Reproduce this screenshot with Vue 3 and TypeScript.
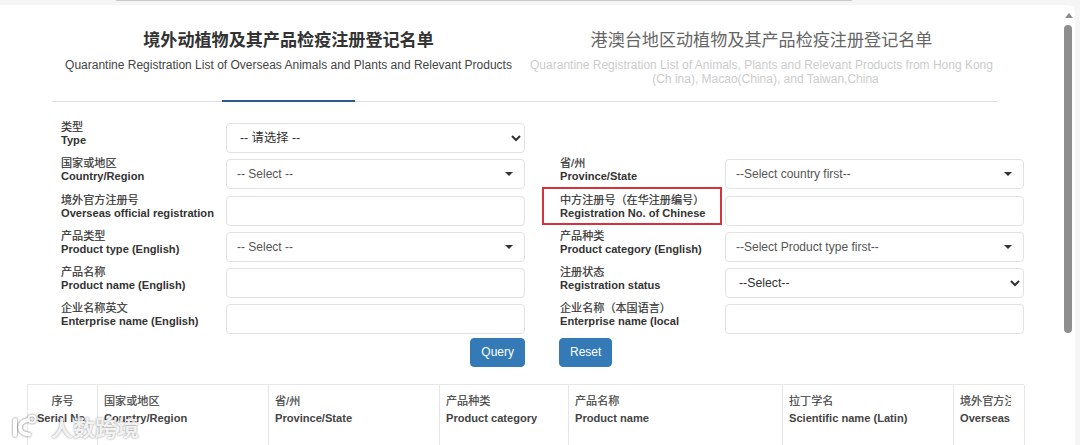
<script setup lang="ts">
type Field = {
  zh: string
  en: string
  kind: 'native' | 'picker' | 'input' | 'empty'
  value?: string
  marked?: boolean
}

const fields: Field[] = [
  { zh: '类型', en: 'Type', kind: 'native', value: '-- 请选择 --' },
  { zh: '', en: '', kind: 'empty' },
  { zh: '国家或地区', en: 'Country/Region', kind: 'picker', value: '-- Select --' },
  { zh: '省/州', en: 'Province/State', kind: 'picker', value: '--Select country first--' },
  { zh: '境外官方注册号', en: 'Overseas official registration', kind: 'input' },
  { zh: '中方注册号（在华注册编号）', en: 'Registration No. of Chinese', kind: 'input', marked: true },
  { zh: '产品类型', en: 'Product type (English)', kind: 'picker', value: '-- Select --' },
  { zh: '产品种类', en: 'Product category (English)', kind: 'picker', value: '--Select Product type first--' },
  { zh: '产品名称', en: 'Product name (English)', kind: 'input' },
  { zh: '注册状态', en: 'Registration status', kind: 'native', value: '--Select--' },
  { zh: '企业名称英文', en: 'Enterprise name (English)', kind: 'input' },
  { zh: '企业名称（本国语言）', en: 'Enterprise name (local', kind: 'input' },
]

const columns = [
  { zh: '序号', en: 'Serial No.', width: 70, center: true },
  { zh: '国家或地区', en: 'Country/Region', width: 171 },
  { zh: '省/州', en: 'Province/State', width: 171 },
  { zh: '产品种类', en: 'Product category', width: 129 },
  { zh: '产品名称', en: 'Product name', width: 214 },
  { zh: '拉丁学名', en: 'Scientific name (Latin)', width: 171 },
  { zh: '境外官方注册号', en: 'Overseas official registration', width: 71 },
]
</script>

<template>
  <div class="page">
    <div class="top-strip"><div class="top-bar"></div></div>
    <div class="panel">
      <main class="content">
        <nav class="tabs">
          <div class="tab active">
            <h2>境外动植物及其产品检疫注册登记名单</h2>
            <p>Quarantine Registration List of Overseas Animals and Plants and Relevant Products</p>
          </div>
          <div class="tab">
            <h2>港澳台地区动植物及其产品检疫注册登记名单</h2>
            <p>Quarantine Registration List of Animals, Plants and Relevant Products from Hong Kong <span class="paren">(Ch</span> ina), Macao(China), and Taiwan,China</p>
          </div>
        </nav>

        <form class="filters" @submit.prevent>
          <div v-for="(f, i) in fields" :key="i" class="field">
            <template v-if="f.kind !== 'empty'">
              <label class="label" :class="{ marked: f.marked }">
                <span>{{ f.zh }}</span>
                <span>{{ f.en }}</span>
              </label>
              <select v-if="f.kind === 'native'" class="control native">
                <option>{{ f.value }}</option>
              </select>
              <div v-else-if="f.kind === 'picker'" class="control picker">
                <span>{{ f.value }}</span>
                <i class="caret"></i>
              </div>
              <input v-else class="control" type="text" />
            </template>
          </div>
          <div class="actions query"><button type="submit" class="btn">Query</button></div>
          <div class="actions reset"><button type="reset" class="btn">Reset</button></div>
        </form>

        <div class="results">
          <div
            v-for="c in columns"
            :key="c.en"
            class="col"
            :class="{ center: c.center }"
            :style="{ width: c.width + 'px' }"
          >
            <div>{{ c.zh }}</div>
            <div>{{ c.en }}</div>
          </div>
        </div>
      </main>

      <aside class="scrollbar">
        <i class="arrow"></i>
        <div class="thumb"></div>
      </aside>
    </div>

    <div class="watermark">
      <svg width="26" height="26" viewBox="0 0 26 26">
        <path d="M3 7v15M16 7c-5 1-8 4-8 7.500s3 6.500 9 7" fill="none" stroke="#fff" stroke-width="4" stroke-linecap="round" />
        <circle cx="20" cy="6" r="3.600" fill="none" stroke="#fff" stroke-width="2" />
      </svg>
      <span>人数跨境</span>
    </div>
  </div>
</template>

<style scoped>
.page {
  position: relative;
  height: 445px;
  overflow: hidden;
  display: flex;
  flex-direction: column;
  background: #f5f5f5;
  font-family: "Liberation Sans", "Noto Sans CJK SC", sans-serif;
  color: #333;
}

.top-strip {
  height: 5px;
  flex: none;
  padding-left: 116px;
}

.top-bar {
  width: 736px;
  height: 1px;
  background: #c9c9c9;
}

.panel {
  flex: 1;
  display: flex;
  margin-right: 5px;
  min-height: 0;
  background: #fff;
  border-top-right-radius: 8px;
}

.content {
  flex: 1;
  min-width: 0;
}

.tabs {
  display: flex;
  width: 946px;
  height: 96px;
  margin-left: 52px;
  border-bottom: 1px solid #ddd;
}

.tab {
  position: relative;
  box-sizing: border-box;
  width: 474px;
  padding: 23px 4px 0;
  text-align: center;
  color: #ccc;
}

.tab h2 {
  margin: 0 0 9px;
  font-size: 17.1px;
  line-height: 22px;
  font-weight: 400;
  color: #666;
  font-family: "Noto Sans CJK SC", sans-serif;
}

.tab p {
  margin: 0;
  font-size: 12px;
  line-height: 13.5px;
}

.paren {
  padding-left: 8px;
}

.tab.active {
  color: #444;
}

.tab.active h2 {
  font-weight: 700;
  color: #333;
}

.tab.active::after {
  content: '';
  position: absolute;
  left: 170px;
  bottom: -1px;
  width: 133px;
  height: 2px;
  background: #2a5a8f;
}

.filters {
  display: grid;
  grid-template-columns: 464px 464px;
  column-gap: 35px;
  grid-auto-rows: 30px;
  row-gap: 6.3px;
  margin: 21px 0 0 61px;
  width: 963px;
}

.field {
  display: flex;
}

.label {
  width: 165px;
  flex: none;
  display: flex;
  flex-direction: column;
  margin-top: -2px;
  font-size: 11.1px;
  line-height: 13px;
  font-weight: 700;
  color: #333;
  white-space: nowrap;
}

.label span:first-child {
  font-weight: 400;
  -webkit-text-stroke: 0.2px #333;
}

.label.marked {
  position: relative;
}

.label.marked::before {
  content: '';
  position: absolute;
  left: -18px;
  top: -7px;
  width: 180px;
  height: 38px;
  border: 2px solid #d8323a;
  box-sizing: border-box;
}

.control {
  box-sizing: border-box;
  width: 299px;
  height: 30px;
  border: 1px solid #e2e2e2;
  border-radius: 4px;
  background: #fff;
  color: #444;
  font-family: inherit;
  font-size: 12px;
  outline: none;
}

.native {
  padding: 0 0 0 9px;
  color: #333;
  font-size: 12.3px;
}

.picker {
  display: flex;
  align-items: center;
  justify-content: space-between;
  padding: 0 11px 0 10px;
  color: #555;
}

.caret {
  width: 0;
  height: 0;
  border: 4px solid transparent;
  border-top: 4px solid #333;
  border-bottom: 0;
}

.actions {
  display: flex;
  height: 30px;
  margin-top: -3px;
}

.query {
  justify-content: flex-end;
}

.reset {
  margin-left: -1px;
}

.btn {
  height: 29px;
  padding: 0 10px;
  border: 1px solid #337ab7;
  border-radius: 4px;
  background: #337ab7;
  color: #fff;
  font-family: inherit;
  font-size: 12px;
}

.results {
  display: flex;
  width: 996px;
  height: 70px;
  margin: 13px 0 0 27px;
  border-top: 1px solid #e6e6e6;
  border-left: 1px solid #e6e6e6;
}

.col {
  box-sizing: border-box;
  flex: none;
  padding: 8px 13px 0 6px;
  border-right: 1px solid #e6e6e6;
  font-size: 11.1px;
  line-height: 17px;
  font-weight: 700;
  color: #444;
  white-space: nowrap;
}

.col > div {
  overflow: hidden;
}

.col.center {
  padding: 8px 0 0;
  text-align: center;
}

.col > div:first-child {
  font-weight: 400;
  -webkit-text-stroke: 0.2px #444;
}

.scrollbar {
  flex: none;
  position: relative;
  width: 11px;
  padding-top: 20px;
  background: #fff;
  border-top-right-radius: 8px;
}

.arrow {
  position: absolute;
  top: 8px;
  left: 1px;
  width: 0;
  height: 0;
  border: 4px solid transparent;
  border-bottom: 5px solid #8a8a8a;
  border-top: 0;
}

.thumb {
  width: 8px;
  height: 308px;
  border-radius: 4px;
  background: #8e8e8e;
}

.watermark {
  position: absolute;
  left: 12px;
  bottom: 6px;
  display: flex;
  align-items: center;
  gap: 13px;
  font-family: "Noto Sans CJK SC", sans-serif;
  font-size: 22px;
  font-weight: 700;
  line-height: 26px;
  color: rgba(255, 255, 255, 0.9);
  text-shadow: 0 0 2px rgba(0, 0, 0, 0.5);
}

.watermark svg {
  filter: drop-shadow(0 0 1px rgba(0, 0, 0, 0.6));
}
</style>

<style>
html,
body {
  overflow: hidden;
}
</style>
